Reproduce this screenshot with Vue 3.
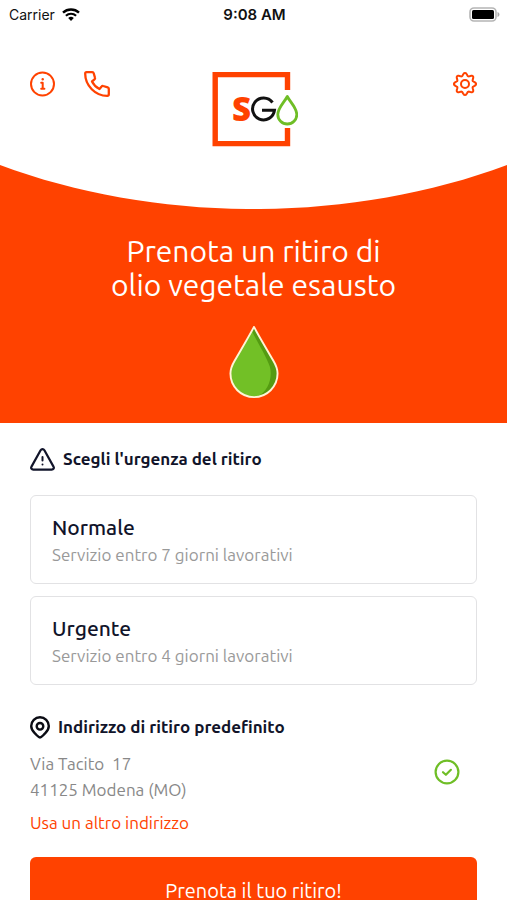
<template>
  <div class="app">
    <div class="status-bar">
      <div class="carrier">
        <span>Carrier</span>
        <svg width="18" height="13" viewBox="0 0 18 13">
          <path d="M1 4.6a11.8 11.8 0 0 1 16 0" fill="none" stroke="#000" stroke-width="2.4" />
          <path d="M3.9 7.7a7.6 7.6 0 0 1 10.2 0" fill="none" stroke="#000" stroke-width="2.2" />
          <path d="M9 13 6.2 10.1a4 4 0 0 1 5.6 0z" />
        </svg>
      </div>
      <span class="time">9:08 AM</span>
      <svg class="battery" width="31" height="15" viewBox="0 0 31 15">
        <rect x="1" y="1" width="26" height="13" rx="4" fill="#fff" stroke="#b5b5b5" stroke-width="1.6" />
        <rect x="3" y="3" width="22" height="9" rx="1.5" />
        <path d="M28.5 5v5c2.6-1 2.6-4 0-5z" fill="#aaa" />
      </svg>
    </div>

    <header class="header">
      <div class="actions">
        <button class="icon-button" type="button" aria-label="Informazioni">
          <svg width="26" height="26" viewBox="0 0 26 26" fill="none" stroke="#ff4200" stroke-width="2" stroke-linecap="round" stroke-linejoin="round">
            <circle cx="12.5" cy="13" r="11.5" />
            <path d="M11.2 11.8h1.5v6M11.2 17.8h3.2" />
            <path d="M12.7 8.1v.1" stroke-width="2.4" />
          </svg>
        </button>
        <button class="icon-button" type="button" aria-label="Telefono">
          <svg width="26" height="26" viewBox="0 0 26 26" fill="none" stroke="#ff4200" stroke-width="2.3" stroke-linejoin="round">
            <path d="M2.5 1.2h5.7c.7 0 1.3.4 1.5 1.1l1.3 4.5c.2.6 0 1.2-.5 1.6L8 10.5c1.6 3.3 4.2 5.8 7.5 7.5l2.1-2.5c.4-.5 1-.7 1.6-.5l4.5 1.3c.7.2 1.1.8 1.1 1.5v5.400c0 .9-.7 1.600-1.600 1.600C11.300 24.800 1.200 14.500 1.200 2.800c0-.9.5-1.600 1.300-1.600z" />
          </svg>
        </button>
      </div>
      <svg class="logo" width="88" height="76" viewBox="0 0 88 76">
        <path d="M77.5 19V3.6H5.2v69h72.3V57" fill="none" stroke="#ff4200" stroke-width="5.4" />
        <text x="22" y="50" class="logo-s">S</text>
        <path d="M62.5 31.5A11 11 0 1 0 64.5 39.2H52" fill="none" stroke="#111" stroke-width="3" />
        <path d="M77.3 25.5C74.5 31 67.8 37 67.8 43.5a9.5 9.5 0 0 0 19 0C86.8 37 80.1 31 77.3 25.5z" fill="#fff" stroke="#6fbe26" stroke-width="2.8" stroke-linejoin="round" />
      </svg>
      <button class="icon-button settings" type="button" aria-label="Impostazioni">
        <svg width="24" height="26" viewBox="0 0 24 26" fill="none" stroke="#ff4200" stroke-width="2" stroke-linejoin="round">
          <path :d="gearPath" />
          <circle cx="12" cy="13" r="4" />
        </svg>
      </button>
    </header>

    <section class="hero">
      <svg class="curve" viewBox="0 0 100 44" preserveAspectRatio="none">
        <path d="M0 0C31 58.7 69 58.7 100 0z" fill="#fff" />
      </svg>
      <h1>Prenota un ritiro di<br />olio vegetale esausto</h1>
      <svg class="drop" width="50" height="74" viewBox="0 0 52 76">
        <path d="M26 1.5C21 11 13.5 23.5 6 36.5 3 41.5 1.5 45 1.5 50a24.5 24.5 0 0 0 49 0c0-5-1.5-8.5-4.5-13.5C38.5 23.5 31 11 26 1.5z" fill="#72c026" />
        <path d="M26 1.5C31 11 38.5 23.5 46 36.5c3 5 4.5 8.5 4.5 13.5 0 13-9 23.5-22 24.5C41 69 45.5 54 42.5 43 39 32 29 17 24 6z" fill="#549b12" />
        <path d="M26 1.5C21 11 13.5 23.5 6 36.5 3 41.5 1.5 45 1.5 50a24.5 24.5 0 0 0 49 0c0-5-1.5-8.5-4.5-13.5C38.5 23.5 31 11 26 1.5z" fill="none" stroke="#fff4d6" stroke-width="2" stroke-linejoin="round" />
      </svg>
    </section>

    <main class="content">
      <h2>
        <svg width="25" height="23" viewBox="0 0 25 23" fill="none" stroke="#11142a" stroke-width="2.2" stroke-linecap="round" stroke-linejoin="round">
          <path d="M10.6 2.3 1.5 18.6c-.9 1.5.1 3 1.8 3h18.4c1.7 0 2.7-1.5 1.8-3L14.4 2.3c-.9-1.5-2.9-1.5-3.8 0z" />
          <path d="M12.5 9v3.5M12.5 16.5v.1" stroke-width="2" />
        </svg>
        Scegli l'urgenza del ritiro
      </h2>

      <div class="options">
        <label
          v-for="option in options"
          :key="option.id"
          class="option"
          :class="{ active: selected === option.id }"
        >
          <input v-model="selected" type="radio" name="urgenza" :value="option.id" />
          <span class="option-title">{{ option.title }}</span>
          <span class="option-text">{{ option.text }}</span>
        </label>
      </div>

      <h2>
        <svg width="20" height="23" viewBox="0 0 20 23" fill="none" stroke="#0b0c14" stroke-width="2.4" stroke-linejoin="round">
          <path d="M10 21.5c-1.5 0-2.7-1.8-5.3-4.3C2.5 15 1.2 13 1.2 10a8.8 8.8 0 0 1 17.6 0c0 3-1.3 5-3.5 7.2-2.6 2.5-3.8 4.3-5.3 4.3z" />
          <circle cx="10" cy="10.3" r="3.3" />
        </svg>
        Indirizzo di ritiro predefinito
      </h2>
      <div class="address">
        <p>Via Tacito&nbsp; 17<br />41125 Modena (MO)</p>
        <svg width="26" height="26" viewBox="0 0 26 26" fill="none" stroke="#6fbe26" stroke-width="2.2" stroke-linecap="round" stroke-linejoin="round">
          <circle cx="13" cy="13" r="11.4" />
          <path d="m9 13.2 2.9 2.6 5-5" />
        </svg>
      </div>
      <a class="other-address" href="#">Usa un altro indirizzo</a>
      <button class="submit" type="button">Prenota il tuo ritiro!</button>
    </main>
  </div>
</template>

<script setup>
import { ref } from "vue";

const options = [
  { id: "normale", title: "Normale", text: "Servizio entro 7 giorni lavorativi" },
  { id: "urgente", title: "Urgente", text: "Servizio entro 4 giorni lavorativi" },
];
const selected = ref("");

// Gear outline with eight rounded teeth
const generateGear = () => {
  const points = [];
  for (let i = 0; i < 96; i++) {
    const angle = (i / 96) * 2 * Math.PI;
    const radius = 9.7 + 1.4 * Math.cos(angle * 8);
    const x = 12 + radius * Math.sin(angle);
    const y = 13 - radius * Math.cos(angle);
    points.push(`${x.toFixed(2)} ${y.toFixed(2)}`);
  }
  return `M${points.join("L")}z`;
};
const gearPath = generateGear();
</script>

<style>
body {
  margin: 0;
  background: #fff;
}
</style>

<style scoped>
.app {
  height: 100vh;
  overflow-y: auto;
  scrollbar-width: none;
  background: #fff;
  color: #11142a;
  font-family: Ubuntu, "Noto Sans", sans-serif;
}

.status-bar {
  display: grid;
  grid-template-columns: 1fr auto 1fr;
  align-items: center;
  height: 28px;
  padding: 0 7px 0 9px;
  color: #111;
  font-family: Inter, sans-serif;
  font-size: 14px;
}

.carrier {
  display: flex;
  align-items: center;
  gap: 7px;
}

.time {
  font-size: 15px;
  font-weight: 600;
}

.battery {
  justify-self: end;
}

.header {
  display: grid;
  grid-template-columns: 1fr auto 1fr;
  height: 94px;
  padding: 43px 30px 0 30px;
}

.actions {
  display: flex;
  align-items: flex-start;
  gap: 28px;
}

.icon-button {
  display: block;
  height: 26px;
  padding: 0;
  border: 0;
  background: none;
  cursor: pointer;
}

.icon-button svg,
.logo,
.curve,
.drop {
  display: block;
}

.settings {
  justify-self: end;
}

.logo-s {
  font-family: "Open Sans", sans-serif;
  font-size: 33px;
  font-weight: 800;
  fill: #ff4200;
}

.hero {
  display: flex;
  flex-direction: column;
  align-items: center;
  padding-bottom: 24px;
  background: #ff4200;
}

.curve {
  width: 100%;
  height: 44px;
}

h1 {
  margin: 25px 0 23px;
  color: #fff;
  font-size: 30px;
  font-weight: 400;
  line-height: 34px;
  text-align: center;
}

.content {
  padding: 24px 30px;
}

h2 {
  display: flex;
  align-items: center;
  gap: 8px;
  margin: 0;
  font-size: 17px;
  font-weight: 700;
  line-height: 24px;
}

.options {
  display: flex;
  flex-direction: column;
  gap: 12px;
  margin: 24px 0 30px;
}

.option {
  position: relative;
  display: flex;
  flex-direction: column;
  padding: 16px 21px;
  border: 1px solid #e2e2e4;
  border-radius: 6px;
  cursor: pointer;
}

.option.active {
  border-color: #ff4200;
}

.option input {
  position: absolute;
  opacity: 0;
}

.option-title {
  font-size: 21px;
  font-weight: 500;
  line-height: 30px;
}

.option-text {
  color: #999;
  font-size: 17px;
  line-height: 25px;
}

.address {
  display: flex;
  align-items: flex-start;
  justify-content: space-between;
  padding: 12px 17px 8px 0;
}

.address svg {
  margin-top: 8px;
}

.address p {
  margin: 0;
  color: #888;
  font-size: 17px;
  line-height: 26px;
}

.other-address {
  display: block;
  color: #ff4200;
  font-size: 17px;
  line-height: 24px;
  text-decoration: none;
}

.submit {
  width: 100%;
  height: 66px;
  margin-top: 22px;
  border: 0;
  border-radius: 6px;
  background: #ff4200;
  color: #fff;
  font-family: inherit;
  font-size: 20px;
  cursor: pointer;
}
</style>
